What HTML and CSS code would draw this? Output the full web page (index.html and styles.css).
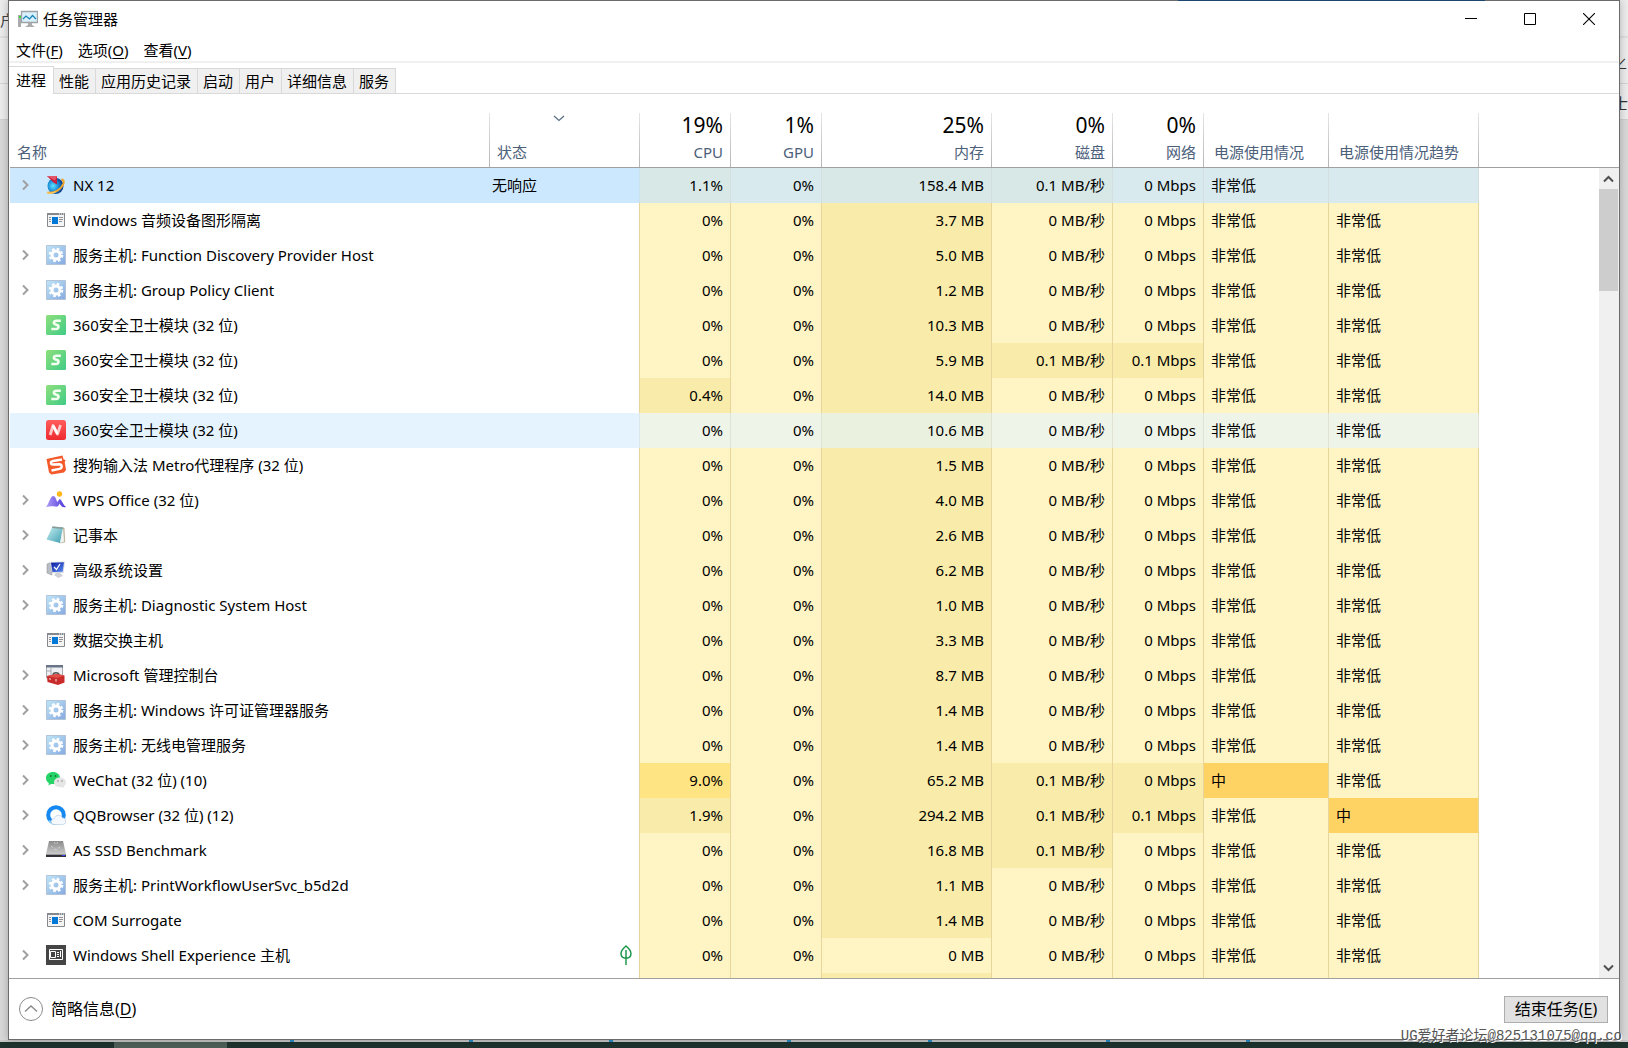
FILE: index.html
```html
<!DOCTYPE html>
<html lang="zh-CN">
<head>
<meta charset="utf-8">
<title>任务管理器</title>
<link rel="stylesheet" href="styles.css">
</head>
<body>
<svg class="sprite" aria-hidden="true">
  <defs>
    <linearGradient id="g-gear" x1="0" y1="0" x2="1" y2="1"><stop offset="0" stop-color="#bfe6f7"/><stop offset="1" stop-color="#86a9e0"/></linearGradient>
    <linearGradient id="g-green" x1="0" y1="0" x2="1" y2="1"><stop offset="0" stop-color="#8fe07c"/><stop offset="1" stop-color="#3fcb86"/></linearGradient>
    <linearGradient id="g-red" x1="0" y1="0" x2="0" y2="1"><stop offset="0" stop-color="#ff5d5d"/><stop offset="1" stop-color="#ee2a2f"/></linearGradient>
    <linearGradient id="g-note" x1="0" y1="0" x2="1" y2="1"><stop offset="0" stop-color="#c9f0f2"/><stop offset="1" stop-color="#3f9fb2"/></linearGradient>
    <linearGradient id="g-wps" x1="0" y1="0" x2="1" y2="0"><stop offset="0" stop-color="#b09cf8"/><stop offset="1" stop-color="#4a35d8"/></linearGradient>
    <linearGradient id="g-disk" x1="0" y1="0" x2="0" y2="1"><stop offset="0" stop-color="#8a8a8a"/><stop offset="1" stop-color="#c9c9c9"/></linearGradient>
    <linearGradient id="g-screen" x1="0" y1="0" x2="1" y2="1"><stop offset="0" stop-color="#0a1a9c"/><stop offset="1" stop-color="#5b8cf5"/></linearGradient>
    <radialGradient id="g-globe" cx=".35" cy=".5" r=".65"><stop offset="0" stop-color="#5fe3ff"/><stop offset=".5" stop-color="#1d8ed8"/><stop offset="1" stop-color="#0a2e7c"/></radialGradient>
  </defs>
  <symbol id="chev" viewBox="0 0 9 12"><path d="M2 1.500 6.500 6 2 10.500" fill="none" stroke="#a0a0a0" stroke-width="2"/></symbol>
  <symbol id="nx" viewBox="0 0 20 20"><circle cx="9.500" cy="11" r="8" fill="url(#g-globe)"/><path d="M1.500 17.500c7 1.500 14-3.500 16-9 .6-2 .3-3.500-2-4.300" fill="none" stroke="#f0a52c" stroke-width="2"/><path d="M1 17c1 2 6 1.500 9-.5" fill="none" stroke="#f7c860" stroke-width="1.500"/><path d="M1 1l10 0 0 8.500-3.500-2z" fill="#c8203c"/><path d="M1 1l10 0-2 4.500z" fill="#e2566b"/></symbol>
  <symbol id="exe" viewBox="0 0 20 20"><path d="M1.500 3.500h17v13h-17z" fill="#f4f4f4" stroke="#85888c"/><path d="M1 3h18v2H1z" fill="#85888c"/><path d="M13 3.500h1v1h-1zM15 3.500h1v1h-1zM17 3.500h1v1h-1z" fill="#fff"/><path d="M6 7h6v7H6z" fill="#0078d7"/><path d="M3 7.500h2M3 9.500h2M3 11.500h2M13 7.500h4M13 9.500h4M13 11.500h3" stroke="#8c8f93"/></symbol>
  <symbol id="gear" viewBox="0 0 20 20"><path d="M.5.5h19v19H.5z" fill="url(#g-gear)" stroke="#b4c4d8"/><circle cx="10" cy="10" r="6.200" fill="none" stroke="#fff" stroke-width="2.200" stroke-dasharray="2.600 2.270"/><circle cx="10" cy="10" r="4" fill="none" stroke="#fff" stroke-width="3"/></symbol>
  <symbol id="s360" viewBox="0 0 20 20"><rect width="20" height="20" rx="1.500" fill="url(#g-green)"/><path d="M14.800 5.800h-4.500c-2.800 0-3.300 2.900-.8 3.700l1.600.5c2.300.8 1.500 4-.9 4H5.300" fill="none" stroke="#f2fff0" stroke-width="2.600"/></symbol>
  <symbol id="n360" viewBox="0 0 20 20"><rect width="20" height="20" rx="2.500" fill="url(#g-red)"/><path d="M4.200 15 7 5.500l4.500 8.500L14.500 5" fill="none" stroke="#ffc9c9" stroke-width="2.800" stroke-linejoin="round"/><path d="M7 5.500l4.500 8.500" stroke="#fff" stroke-width="2.600"/></symbol>
  <symbol id="sogou" viewBox="0 0 20 20"><path d="M.5 4 16.500.5l1.200 4 2 .5-1 2 1.300 8-2 2.500L5.500 19.500 3 17.500z" fill="#f4592a"/><path d="M16 4.500 7 6c-3 .6-2.500 3.600 0 3.500l6-.2c3.500 0 3.500 3.700.5 4.500L5.500 15.500" fill="none" stroke="#fff" stroke-width="2.400"/></symbol>
  <symbol id="wps" viewBox="0 0 20 20"><path d="M0 17C3 14 4 6 7.500 6c2 0 2.500 4 4 6l2-3c2 0 3.500 6 6.500 8-3 .8-5-.5-6.500-3.500C12.500 16.500 11 17 9 16.500 5 16 3 17 0 17z" fill="url(#g-wps)"/><circle cx="13.500" cy="4" r="2.700" fill="#ffb81c"/></symbol>
  <symbol id="note" viewBox="0 0 20 20"><path d="M7 2l11 1 .8 14-5 1z" fill="#d9d6c2" stroke="#9a9378" stroke-width=".6"/><path d="M6.500 1.500 17 2.500 14 18 .5 14.500z" fill="url(#g-note)"/><path d="M6.500 1.500 17 2.500l-.4 1.600L5.800 3z" fill="#8a9a98"/><path d="M14 18l2.600-14L18 16.500z" fill="#eef4f2"/></symbol>
  <symbol id="sys" viewBox="0 0 20 20"><path d="M1 4 6 2v13l-5-2z" fill="#b9bdc6" stroke="#888" stroke-width=".5"/><path d="M4 2l15-.5-1.500 11.500L6 13z" fill="#d9dbe2"/><path d="M5 2.800 18 2.300l-1.300 9.500L6.500 12z" fill="url(#g-screen)"/><path d="M8 7l2.500 2.500L14 4" fill="none" stroke="#fff" stroke-width="1.200"/><path d="M10 13h4l3 3-5 2-4-3z" fill="#cfd1d6"/></symbol>
  <symbol id="mmc" viewBox="0 0 20 20"><path d="M.5 1h16v12H.5z" fill="#eef0f3" stroke="#a6a9b0"/><path d="M0 0h17v2.500H0z" fill="#697487"/><path d="M5 3v7M1 6h4" stroke="#a6a9b0"/><path d="M7 10c0-3 6-3 6 0" fill="none" stroke="#555" stroke-width="1.400"/><path d="M1 11l10-2 7.500 1.500v7L12 20 1.500 17z" fill="#c92a2a"/><path d="M1 11l10-2 7.500 1.500L11 13z" fill="#e04e4a"/><path d="M4 13v2M10 14v2.500" stroke="#eee"/></symbol>
  <symbol id="wechat" viewBox="0 0 20 20"><path d="M7 2c4 0 7 2.500 7 6s-3 6-7 6l-2 0-2.500 1.500.3-2.500C1 12 0 10 0 8c0-3.500 3-6 7-6z" fill="#25d366"/><path d="M14 7.500c3.300 0 6 2 6 5 0 1.600-.8 2.800-2 3.600l.3 2-2-1.100c-4.300.8-8.300-1-8.300-4.500 0-3 2.700-5 6-5z" fill="#e6e6e6"/><circle cx="4.800" cy="6" r=".9" fill="#15753a"/><circle cx="9.500" cy="6" r=".9" fill="#15753a"/><circle cx="12" cy="11" r=".8" fill="#888"/><circle cx="16" cy="11" r=".8" fill="#888"/></symbol>
  <symbol id="qq" viewBox="0 0 20 20"><circle cx="10" cy="10" r="7.800" fill="#fff" stroke="#1689f0" stroke-width="4"/><path d="M3 15.500A9 9 0 0 0 10 19.500" fill="none" stroke="#8ccbf7" stroke-width="2"/><path d="M6 19c-2-3 0-5.500 2.500-5.500C9.500 9.500 15 9 16.500 13c3-.5 4.500 3.500 2 6-.8.800-11 1-12.500 0z" fill="#f5f9fd" stroke="#b3cce4" stroke-width=".7"/></symbol>
  <symbol id="ssd" viewBox="0 0 20 20"><path d="M3 1h14l3 13H0z" fill="url(#g-disk)"/><path d="M0 14.500h20v2.500H0z" fill="#303036"/><path d="M16 15.500h3" stroke="#3b45ff"/><path d="M8.500 2l.5 2M11.500 2l-.5 2M5 6l2 2M14 7l-2 1M8 9l3 1" stroke="#ddd" stroke-width=".7"/></symbol>
  <symbol id="shell" viewBox="0 0 20 20"><path d="M0 0h20v20H0z" fill="#454545"/><path d="M3.500 4.500h13v10h-13z" fill="none" stroke="#fff"/><path d="M4.500 6.500h5v6h-5z" fill="none" stroke="#fff"/><path d="M11 7.500h2M11 9.500h2M11 11.500h2M14.500 6v6" stroke="#fff"/></symbol>
</svg>

<div class="desk-left" aria-hidden="true">户</div>
<div class="desk-right" aria-hidden="true"><span>∠</span><span>士</span></div>

<main class="window">
  <header class="titlebar">
    <svg class="app-icon" viewBox="0 0 20 18" aria-hidden="true"><path d="M0 5h3v12H0z" fill="#a9abad"/><path d="M1 6h2v2H1z" fill="#2fe32f"/><path d="M3.500 1.500h16v11h-16z" fill="#d8f0fc" stroke="#9fa3a6" stroke-width="1.300"/><path d="M5 9l3-3 3.500 3L14.500 5.500 18 9" fill="none" stroke="#1683b8" stroke-width="1.200"/><path d="M10 13h4v2l3 2H7l3-2z" fill="#a9abad"/></svg>
    <h1>任务管理器</h1>
    <div class="win-buttons">
      <button aria-label="最小化"><svg viewBox="0 0 12 12"><path d="M0 5.500h12" stroke="#000"/></svg></button>
      <button aria-label="最大化"><svg viewBox="0 0 12 12"><path d="M.5.5h11v11H.5z" fill="none" stroke="#000"/></svg></button>
      <button aria-label="关闭"><svg viewBox="0 0 12 12"><path d="M0 0l12 12M12 0 0 12" stroke="#000" stroke-width="1.100"/></svg></button>
    </div>
  </header>
  <nav class="menubar">
    <button>文件(<u>F</u>)</button>
    <button>选项(<u>O</u>)</button>
    <button>查看(<u>V</u>)</button>
  </nav>
  <div class="tabs" role="tablist">
    <button role="tab" aria-selected="true" class="active">进程</button>
    <button role="tab">性能</button>
    <button role="tab">应用历史记录</button>
    <button role="tab">启动</button>
    <button role="tab">用户</button>
    <button role="tab">详细信息</button>
    <button role="tab">服务</button>
  </div>

  <section class="list">
    <table>
      <colgroup><col class="c-name"><col class="c-trend"><col class="c-num"><col class="c-num"><col class="c-mem"><col class="c-disk"><col class="c-num"><col class="c-power"><col class="c-trend"><col></colgroup>
      <thead>
        <tr>
          <th class="h-name">名称</th>
          <th class="h-status"><svg class="sort" viewBox="0 0 12 7" aria-hidden="true"><path d="M1 1l5 4.500L11 1" fill="none" stroke="#5b7085" stroke-width="1.300"/></svg>状态</th>
          <th class="n"><b>19%</b>CPU</th>
          <th class="n"><b>1%</b>GPU</th>
          <th class="n"><b>25%</b>内存</th>
          <th class="n"><b>0%</b>磁盘</th>
          <th class="n"><b>0%</b>网络</th>
          <th class="h-power">电源使用情况</th>
          <th class="h-power">电源使用情况趋势</th>
          <td class="rest"></td>
        </tr>
      </thead>
      <tbody>
        <tr class="selected"><td><div class="name"><button aria-label="展开"><svg><use href="#chev"/></svg></button><svg class="ico"><use href="#nx"/></svg>NX 12</div></td><td class="st">无响应</td><td class="n w">1.1%</td><td class="n">0%</td><td class="n w">158.4 MB</td><td class="n w">0.1 MB/秒</td><td class="n">0 Mbps</td><td class="p">非常低</td><td class="p"></td><td class="rest"></td></tr>
        <tr><td><div class="name leaf"><svg class="ico"><use href="#exe"/></svg>Windows 音频设备图形隔离</div></td><td class="st"></td><td class="n">0%</td><td class="n">0%</td><td class="n w">3.7 MB</td><td class="n">0 MB/秒</td><td class="n">0 Mbps</td><td class="p">非常低</td><td class="p">非常低</td><td class="rest"></td></tr>
        <tr><td><div class="name"><button aria-label="展开"><svg><use href="#chev"/></svg></button><svg class="ico"><use href="#gear"/></svg>服务主机: Function Discovery Provider Host</div></td><td class="st"></td><td class="n">0%</td><td class="n">0%</td><td class="n w">5.0 MB</td><td class="n">0 MB/秒</td><td class="n">0 Mbps</td><td class="p">非常低</td><td class="p">非常低</td><td class="rest"></td></tr>
        <tr><td><div class="name"><button aria-label="展开"><svg><use href="#chev"/></svg></button><svg class="ico"><use href="#gear"/></svg>服务主机: Group Policy Client</div></td><td class="st"></td><td class="n">0%</td><td class="n">0%</td><td class="n w">1.2 MB</td><td class="n">0 MB/秒</td><td class="n">0 Mbps</td><td class="p">非常低</td><td class="p">非常低</td><td class="rest"></td></tr>
        <tr><td><div class="name leaf"><svg class="ico"><use href="#s360"/></svg>360安全卫士模块 (32 位)</div></td><td class="st"></td><td class="n">0%</td><td class="n">0%</td><td class="n w">10.3 MB</td><td class="n">0 MB/秒</td><td class="n">0 Mbps</td><td class="p">非常低</td><td class="p">非常低</td><td class="rest"></td></tr>
        <tr><td><div class="name leaf"><svg class="ico"><use href="#s360"/></svg>360安全卫士模块 (32 位)</div></td><td class="st"></td><td class="n">0%</td><td class="n">0%</td><td class="n w">5.9 MB</td><td class="n w">0.1 MB/秒</td><td class="n w">0.1 Mbps</td><td class="p">非常低</td><td class="p">非常低</td><td class="rest"></td></tr>
        <tr><td><div class="name leaf"><svg class="ico"><use href="#s360"/></svg>360安全卫士模块 (32 位)</div></td><td class="st"></td><td class="n w">0.4%</td><td class="n">0%</td><td class="n w">14.0 MB</td><td class="n">0 MB/秒</td><td class="n">0 Mbps</td><td class="p">非常低</td><td class="p">非常低</td><td class="rest"></td></tr>
        <tr class="hover"><td><div class="name leaf"><svg class="ico"><use href="#n360"/></svg>360安全卫士模块 (32 位)</div></td><td class="st"></td><td class="n">0%</td><td class="n">0%</td><td class="n w">10.6 MB</td><td class="n">0 MB/秒</td><td class="n">0 Mbps</td><td class="p">非常低</td><td class="p">非常低</td><td class="rest"></td></tr>
        <tr><td><div class="name leaf"><svg class="ico"><use href="#sogou"/></svg>搜狗输入法 Metro代理程序 (32 位)</div></td><td class="st"></td><td class="n">0%</td><td class="n">0%</td><td class="n w">1.5 MB</td><td class="n">0 MB/秒</td><td class="n">0 Mbps</td><td class="p">非常低</td><td class="p">非常低</td><td class="rest"></td></tr>
        <tr><td><div class="name"><button aria-label="展开"><svg><use href="#chev"/></svg></button><svg class="ico"><use href="#wps"/></svg>WPS Office (32 位)</div></td><td class="st"></td><td class="n">0%</td><td class="n">0%</td><td class="n w">4.0 MB</td><td class="n">0 MB/秒</td><td class="n">0 Mbps</td><td class="p">非常低</td><td class="p">非常低</td><td class="rest"></td></tr>
        <tr><td><div class="name"><button aria-label="展开"><svg><use href="#chev"/></svg></button><svg class="ico"><use href="#note"/></svg>记事本</div></td><td class="st"></td><td class="n">0%</td><td class="n">0%</td><td class="n w">2.6 MB</td><td class="n">0 MB/秒</td><td class="n">0 Mbps</td><td class="p">非常低</td><td class="p">非常低</td><td class="rest"></td></tr>
        <tr><td><div class="name"><button aria-label="展开"><svg><use href="#chev"/></svg></button><svg class="ico"><use href="#sys"/></svg>高级系统设置</div></td><td class="st"></td><td class="n">0%</td><td class="n">0%</td><td class="n w">6.2 MB</td><td class="n">0 MB/秒</td><td class="n">0 Mbps</td><td class="p">非常低</td><td class="p">非常低</td><td class="rest"></td></tr>
        <tr><td><div class="name"><button aria-label="展开"><svg><use href="#chev"/></svg></button><svg class="ico"><use href="#gear"/></svg>服务主机: Diagnostic System Host</div></td><td class="st"></td><td class="n">0%</td><td class="n">0%</td><td class="n w">1.0 MB</td><td class="n">0 MB/秒</td><td class="n">0 Mbps</td><td class="p">非常低</td><td class="p">非常低</td><td class="rest"></td></tr>
        <tr><td><div class="name leaf"><svg class="ico"><use href="#exe"/></svg>数据交换主机</div></td><td class="st"></td><td class="n">0%</td><td class="n">0%</td><td class="n w">3.3 MB</td><td class="n">0 MB/秒</td><td class="n">0 Mbps</td><td class="p">非常低</td><td class="p">非常低</td><td class="rest"></td></tr>
        <tr><td><div class="name"><button aria-label="展开"><svg><use href="#chev"/></svg></button><svg class="ico"><use href="#mmc"/></svg>Microsoft 管理控制台</div></td><td class="st"></td><td class="n">0%</td><td class="n">0%</td><td class="n w">8.7 MB</td><td class="n">0 MB/秒</td><td class="n">0 Mbps</td><td class="p">非常低</td><td class="p">非常低</td><td class="rest"></td></tr>
        <tr><td><div class="name"><button aria-label="展开"><svg><use href="#chev"/></svg></button><svg class="ico"><use href="#gear"/></svg>服务主机: Windows 许可证管理器服务</div></td><td class="st"></td><td class="n">0%</td><td class="n">0%</td><td class="n w">1.4 MB</td><td class="n">0 MB/秒</td><td class="n">0 Mbps</td><td class="p">非常低</td><td class="p">非常低</td><td class="rest"></td></tr>
        <tr><td><div class="name"><button aria-label="展开"><svg><use href="#chev"/></svg></button><svg class="ico"><use href="#gear"/></svg>服务主机: 无线电管理服务</div></td><td class="st"></td><td class="n">0%</td><td class="n">0%</td><td class="n w">1.4 MB</td><td class="n">0 MB/秒</td><td class="n">0 Mbps</td><td class="p">非常低</td><td class="p">非常低</td><td class="rest"></td></tr>
        <tr><td><div class="name"><button aria-label="展开"><svg><use href="#chev"/></svg></button><svg class="ico"><use href="#wechat"/></svg>WeChat (32 位) (10)</div></td><td class="st"></td><td class="n hot">9.0%</td><td class="n">0%</td><td class="n w">65.2 MB</td><td class="n w">0.1 MB/秒</td><td class="n w">0 Mbps</td><td class="p max">中</td><td class="p">非常低</td><td class="rest"></td></tr>
        <tr><td><div class="name"><button aria-label="展开"><svg><use href="#chev"/></svg></button><svg class="ico"><use href="#qq"/></svg>QQBrowser (32 位) (12)</div></td><td class="st"></td><td class="n w">1.9%</td><td class="n">0%</td><td class="n w">294.2 MB</td><td class="n w">0.1 MB/秒</td><td class="n w">0.1 Mbps</td><td class="p">非常低</td><td class="p max">中</td><td class="rest"></td></tr>
        <tr><td><div class="name"><button aria-label="展开"><svg><use href="#chev"/></svg></button><svg class="ico"><use href="#ssd"/></svg>AS SSD Benchmark</div></td><td class="st"></td><td class="n">0%</td><td class="n">0%</td><td class="n w">16.8 MB</td><td class="n w">0.1 MB/秒</td><td class="n">0 Mbps</td><td class="p">非常低</td><td class="p">非常低</td><td class="rest"></td></tr>
        <tr><td><div class="name"><button aria-label="展开"><svg><use href="#chev"/></svg></button><svg class="ico"><use href="#gear"/></svg>服务主机: PrintWorkflowUserSvc_b5d2d</div></td><td class="st"></td><td class="n">0%</td><td class="n">0%</td><td class="n w">1.1 MB</td><td class="n">0 MB/秒</td><td class="n">0 Mbps</td><td class="p">非常低</td><td class="p">非常低</td><td class="rest"></td></tr>
        <tr><td><div class="name leaf"><svg class="ico"><use href="#exe"/></svg>COM Surrogate</div></td><td class="st"></td><td class="n">0%</td><td class="n">0%</td><td class="n w">1.4 MB</td><td class="n">0 MB/秒</td><td class="n">0 Mbps</td><td class="p">非常低</td><td class="p">非常低</td><td class="rest"></td></tr>
        <tr><td><div class="name"><button aria-label="展开"><svg><use href="#chev"/></svg></button><svg class="ico"><use href="#shell"/></svg>Windows Shell Experience 主机</div></td><td class="st eco"><svg viewBox="0 0 12 20" role="img" aria-label="节能"><path d="M6 1C3 3.500 1 5.500 1 8.500c0 2.800 2 4.700 5 4.700s5-1.900 5-4.700C11 5.500 9 3.500 6 1zM6 5v15" fill="none" stroke="#169344" stroke-width="1.400"/></svg></td><td class="n">0%</td><td class="n">0%</td><td class="n">0 MB</td><td class="n">0 MB/秒</td><td class="n">0 Mbps</td><td class="p">非常低</td><td class="p">非常低</td><td class="rest"></td></tr>
        <tr><td></td><td class="st"></td><td class="n"></td><td class="n"></td><td class="n w"></td><td class="n"></td><td class="n"></td><td class="p"></td><td class="p"></td><td class="rest"></td></tr>
      </tbody>
    </table>
    <div class="scroll">
      <div class="scroll-head"></div>
      <button aria-label="向上滚动"><svg viewBox="0 0 11 8"><path d="M1 6.500 5.500 2 10 6.500" fill="none" stroke="#505050" stroke-width="2"/></svg></button>
      <div class="track"><div class="thumb"></div></div>
      <button aria-label="向下滚动"><svg viewBox="0 0 11 8"><path d="M1 1.500 5.500 6 10 1.500" fill="none" stroke="#505050" stroke-width="2"/></svg></button>
    </div>
  </section>

  <footer class="footer">
    <button class="fewer"><svg viewBox="0 0 24 24" aria-hidden="true"><circle cx="12" cy="12" r="11.500" fill="none" stroke="#8a8a8a"/><path d="M6 14.500 12 9l6 5.500" fill="none" stroke="#8a8a8a" stroke-width="1.400"/></svg><span>简略信息(<u>D</u>)</span></button>
    <button class="end">结束任务(<u>E</u>)</button>
  </footer>
</main>
<div class="desk-edge"></div>
<div class="taskbar"></div>
<div class="watermark">UG爱好者论坛@825131075@qq.co</div>
</body>
</html>
```
FILE: styles.css
```css
* { box-sizing: border-box; }

body {
  margin: 0;
  height: 100vh;
  overflow: hidden;
  display: flex;
  flex-direction: column;
  position: relative;
  background:
    linear-gradient(#dfdfdf, #dfdfdf) 0 36px / 100% 2px no-repeat,
    linear-gradient(#d4d4d4, #d4d4d4) 0 83px / 100% 1px no-repeat,
    linear-gradient(#d0d0d0, #d0d0d0) 0 119px / 100% 1px no-repeat,
    linear-gradient(#ececec, #ececec) 0 0 / 100% 119px no-repeat,
    #d8d8d8;
  color: #000;
  font: 15px/20px "Noto Sans", "Noto Sans CJK SC", sans-serif;
}

button {
  margin: 0;
  padding: 0;
  border: 0;
  background: none;
  color: inherit;
  font: inherit;
}

svg { display: block; }

u { text-underline-offset: 2px; }

.sprite { position: absolute; width: 0; height: 0; }

/* Slivers of the application behind the window */
.desk-left {
  position: absolute;
  left: 0;
  top: 10px;
  width: 8px;
  overflow: hidden;
  color: #444;
}

.desk-right {
  position: absolute;
  right: 0;
  top: 53px;
  width: 8px;
  overflow: hidden;
  display: grid;
  gap: 20px;
  direction: rtl;
  color: #333;
}

.window {
  flex: 1;
  min-height: 0;
  margin: 0 8px;
  display: flex;
  flex-direction: column;
  position: relative;
  background: #fff;
  border: 1px solid #6b6b6b;
  box-shadow: 0 0 8px rgba(0, 0, 0, .25);
}

/* Accent of the program behind, showing along the top edge */
.window::before {
  content: "";
  position: absolute;
  top: -1px;
  right: 134px;
  width: 307px;
  height: 1px;
  background: #1c4570;
}

.titlebar {
  flex: none;
  height: 36px;
  padding: 0 1px 0 9px;
  display: flex;
  align-items: center;
}

.app-icon { width: 20px; height: 18px; }

.titlebar h1 {
  margin: 0 auto 0 5px;
  font-size: 15px;
  font-weight: 400;
}

.win-buttons { display: flex; }

.win-buttons button {
  width: 59px;
  height: 34px;
  display: grid;
  place-items: center;
}

.win-buttons svg { width: 12px; height: 12px; }

.menubar {
  flex: none;
  height: 26px;
  padding: 3px 7px 1px;
  display: flex;
  gap: 15px;
  border-bottom: 2px solid #f0f0f0;
}

.tabs {
  flex: none;
  height: 31px;
  display: flex;
  align-items: flex-end;
  border-bottom: 1px solid #d9d9d9;
}

.tabs button {
  height: 25px;
  padding: 0 6px 0 5px;
  background: #f0f0f0;
  border: solid #d9d9d9;
  border-width: 1px 1px 0 0;
}

.tabs .active {
  height: 28px;
  margin-bottom: -1px;
  padding: 0 7px 2px;
  background: #fff;
}

.list {
  flex: 1;
  min-height: 0;
  overflow: hidden;
  margin-left: 1px;
  display: flex;
  align-items: stretch;
}

.list table {
  flex: 1;
  align-self: flex-start;
  width: 100%;
  table-layout: fixed;
  border-spacing: 0;
}

.c-name { width: 480px; }
.c-trend { width: 150px; }
.c-num { width: 91px; }
.c-mem { width: 170px; }
.c-disk { width: 121px; }
.c-power { width: 125px; }

th, thead td {
  height: 74px;
  padding: 0 8px 5px 7px;
  border-bottom: 1px solid #a0a0a0;
  background: linear-gradient(#e6e6e6, #b4b4b4) right bottom / 1px 54px no-repeat;
  color: #4c607a;
  font-weight: 400;
  text-align: left;
  vertical-align: bottom;
}

th b {
  display: block;
  margin-bottom: 5px;
  color: #000;
  font-size: 21px;
  font-weight: 400;
  line-height: 24px;
}

th.h-power { padding-left: 10px; }

.sort {
  width: 12px;
  height: 7px;
  margin: 0 0 20px 56px;
}

tbody td {
  height: 35px;
  padding: 0 0 2px;
  white-space: nowrap;
  overflow: hidden;
}

th.n, tbody .n { text-align: right; }

tbody .n, tbody .p {
  padding: 0 7px 2px;
  background: #fff4c4;
  border-right: 1px solid #e8d59c;
}

tbody .st {
  padding: 0 7px 2px 2px;
  border-right: 1px solid #e8d59c;
}

tbody .w { background: #f9ecaa; }
tbody .hot { background: #ffe484; }
tbody .max { background: #ffd264; }

.selected td { background: #cce8ff; }
.selected .n, .selected .p { background: #d8eaee; border-color: #d3dee0; }
.selected .st { border-color: #cce0ee; }
.selected .w { background: #d7e8e6; }

.hover td { background: #e5f3ff; }
.hover .n, .hover .p { background: #eff4e8; border-color: #e0e2d4; }
.hover .st { border-color: #dde8ee; }
.hover .w { background: #ebf1df; }

thead td.rest, tbody td.rest { background: none; }

.name {
  padding-left: 11px;
  display: flex;
  align-items: center;
}

.name.leaf { padding-left: 36px; }

.name button { width: 9px; margin-right: 16px; }

.name button svg { width: 9px; height: 12px; }

.name .ico {
  flex: none;
  width: 20px;
  height: 20px;
  margin-right: 7px;
}

.eco svg { width: 12px; height: 20px; margin-left: auto; }

.scroll {
  flex: none;
  width: 20px;
  display: flex;
  flex-direction: column;
  background: #f0f0f0;
}

.scroll-head {
  height: 74px;
  background: #fff;
  border-bottom: 1px solid #a0a0a0;
}

.scroll button {
  height: 21px;
  padding-right: 1px;
  display: grid;
  place-items: center;
}

.scroll button svg { width: 11px; height: 8px; }

.track { flex: 1; }

.thumb {
  width: 19px;
  height: 102px;
  background: #cdcdcd;
}

.footer {
  flex: none;
  height: 61px;
  padding: 0 11px 0 10px;
  display: flex;
  align-items: center;
  justify-content: space-between;
  border-top: 1px solid #a0a0a0;
  font-size: 16px;
}

.fewer {
  display: flex;
  align-items: center;
  gap: 8px;
}

.fewer svg { width: 24px; height: 24px; }

.end {
  width: 104px;
  height: 27px;
  background: #e1e1e1;
  border: 1px solid #adadad;
}

/* Strip between the window and the taskbar, with its blue marks */
.desk-edge {
  flex: none;
  height: 2px;
  background:
    linear-gradient(#2a8fc8, #2a8fc8) 290px 0 / 4px 2px no-repeat,
    linear-gradient(#2a8fc8, #2a8fc8) 469px 0 / 4px 2px no-repeat,
    linear-gradient(#2a8fc8, #2a8fc8) 609px 0 / 4px 2px no-repeat,
    linear-gradient(#2a8fc8, #2a8fc8) 787px 0 / 4px 2px no-repeat,
    linear-gradient(#2a8fc8, #2a8fc8) 928px 0 / 4px 2px no-repeat,
    linear-gradient(#2a8fc8, #2a8fc8) 1106px 0 / 4px 2px no-repeat,
    linear-gradient(#2a8fc8, #2a8fc8) 1246px 0 / 4px 2px no-repeat,
    linear-gradient(#2a8fc8, #2a8fc8) 1425px 0 / 4px 2px no-repeat,
    #c8c8c8;
}

.taskbar {
  flex: none;
  height: 6px;
  background: linear-gradient(#4d5f58, #4d5f58) 114px 0 / 113px 100% no-repeat, #1e332e;
}

.watermark {
  position: absolute;
  right: 6px;
  bottom: 2px;
  color: #555;
  font: 14px/20px "Liberation Mono", "Noto Sans CJK SC", monospace;
  text-shadow: 1px 1px 0 #fff;
}
```
